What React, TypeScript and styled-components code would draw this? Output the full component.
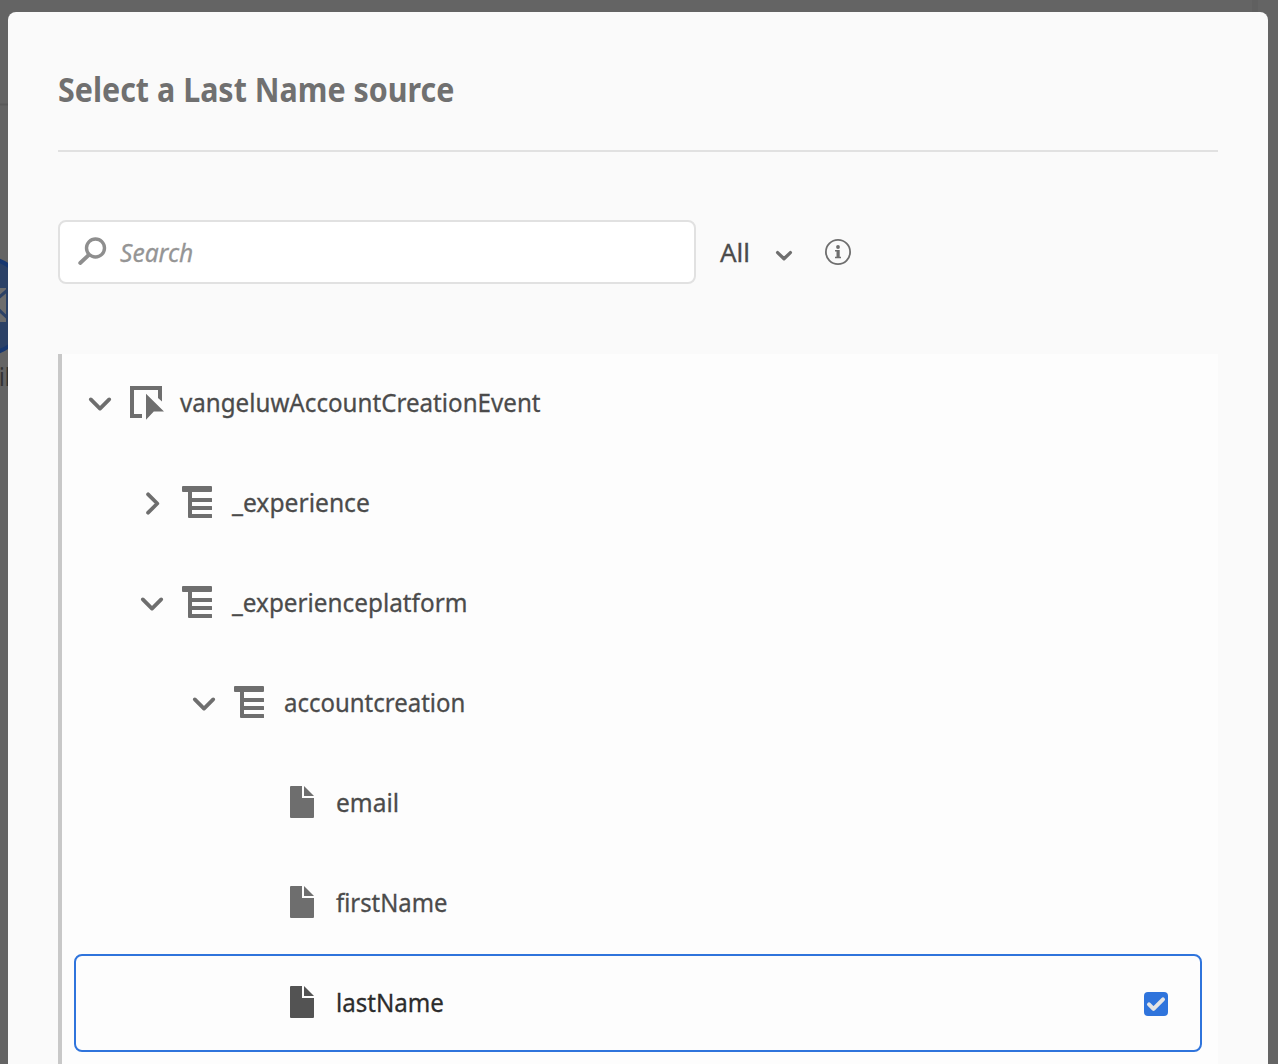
import React from "react";
import styled, { createGlobalStyle } from "styled-components";

const GlobalStyle = createGlobalStyle`
  *, *::before, *::after { box-sizing: border-box; }
  html, body { margin: 0; padding: 0; overflow: hidden; }
  body { font-family: "Noto Sans", "Open Sans", sans-serif; }
`;

const Screen = styled.div`
  position: relative;
  width: 1278px;
  height: 1064px;
  overflow: hidden;
  background: #646464;
  padding: 12px 10px 0 8px;
`;

const Canvas = styled.svg`
  position: absolute;
  left: 0;
  top: 0;
`;

const CanvasLabel = styled.span`
  position: absolute;
  left: -1px;
  top: 359px;
  font-size: 26px;
  line-height: 34px;
  transform: scaleX(0.85);
  transform-origin: left center;
  color: #333;
`;

const Dialog = styled.section`
  position: relative;
  height: 1100px;
  padding: 0 50px;
  border-radius: 8px;
  background: #fafafa;
`;

const Header = styled.header`
  height: 140px;
  padding-top: 54px;
  border-bottom: 2px solid #e1e1e1;
`;

const Title = styled.h1`
  margin: 0;
  width: max-content;
  font-size: 34px;
  line-height: 46px;
  font-weight: 700;
  color: #707070;
  transform: scaleX(0.895);
  transform-origin: left center;
`;

const Toolbar = styled.div`
  display: flex;
  align-items: center;
  height: 64px;
  margin-top: 68px;
`;

const SearchField = styled.div`
  display: flex;
  align-items: center;
  width: 638px;
  height: 64px;
  padding-left: 18px;
  border: 2px solid #e1e1e1;
  border-radius: 8px;
  background: #fff;
`;

const Text = styled.span<{ $fit: number; $color?: string; $italic?: boolean }>`
  display: block;
  width: max-content;
  font-size: 26px;
  line-height: 36px;
  white-space: nowrap;
  color: ${(p) => p.$color ?? "#4b4b4b"};
  -webkit-text-stroke: 0.3px currentColor;
  font-style: ${(p) => (p.$italic ? "italic" : "normal")};
  transform: scaleX(${(p) => p.$fit});
  transform-origin: left center;
`;

const RowText = styled(Text)`
  padding-bottom: 2px;
`;

const SearchText = styled.div`
  margin-left: 12px;
`;

const Picker = styled.div`
  display: flex;
  align-items: center;
  width: 105px;
  margin-left: 24px;
`;

const PickerLabel = styled.div`
  width: 55px;
`;

const Icon = styled.svg`
  display: block;
  flex: none;
`;

const Tree = styled.div`
  display: flex;
  flex-direction: column;
  gap: 2px;
  height: 760px;
  margin-top: 70px;
  padding: 0 16px 0 12px;
  border-left: 4px solid #c8c8c8;
  background: #fdfdfd;
`;

const Row = styled.div<{ $level: number; $selected?: boolean }>`
  display: flex;
  align-items: center;
  flex: none;
  height: 98px;
  padding-left: ${(p) => 8 + p.$level * 52}px;
  padding-right: 32px;
  border: 2px solid ${(p) => (p.$selected ? "#2f74dc" : "transparent")};
  border-radius: 8px;
`;

const Toggle = styled.div`
  display: flex;
  justify-content: center;
  width: 32px;
  margin-right: 14px;
`;

const RowIcon = styled.div`
  width: 36px;
  margin-right: 14px;
  padding-bottom: 2px;
`;

const Check = styled.div`
  display: flex;
  align-items: center;
  justify-content: center;
  width: 24px;
  height: 24px;
  margin: 2px 0 0 auto;
  border-radius: 4px;
  background: #2f74dc;
`;

const Chevron = ({ open }: { open: boolean }) => (
  <Icon width="32" height="32" viewBox="0 0 32 32" fill="none" stroke="#6e6e6e" strokeWidth="3.8" strokeLinecap="round" strokeLinejoin="round">
    <path d={open ? "M6.8 12.4 L16 21.6 L25.2 12.4" : "M12.1 7.3 L21.3 16.5 L12.1 25.7"} />
  </Icon>
);

const EventIcon = () => (
  <Icon width="36" height="36" viewBox="0 0 36 36" fill="#6e6e6e">
    <path d="M0 2H32V17.5L28 14V6H4V30H12V34H0Z" />
    <path d="M16 9.7L34 27.5H23.8L16 35.7Z" />
  </Icon>
);

const ObjectIcon = () => (
  <Icon width="36" height="36" viewBox="0 0 36 36" fill="#6e6e6e">
    <path d="M1 2H29Q30 2 30 3V7Q30 8 29 8H10V14H29.5Q30 14 30 14.5V17.5Q30 18 29.5 18H10V22H29.5Q30 22 30 22.5V25.5Q30 26 29.5 26H10V30H29.5Q30 30 30 30.5V33.5Q30 34 29.5 34H7Q6 34 6 33V8H1Q0 8 0 7V3Q0 2 1 2Z" />
  </Icon>
);

const FileIcon = ({ color }: { color: string }) => (
  <Icon width="36" height="36" viewBox="0 0 36 36" fill={color}>
    <path d="M5 2H16V14H28V33Q28 34 27 34H5Q4 34 4 33V3Q4 2 5 2Z" />
    <path d="M18 2L28 12H18Z" />
  </Icon>
);

type Node = {
  name: string;
  level: number;
  fit: number;
  kind: "event" | "object" | "file";
  open?: boolean;
  selected?: boolean;
};

const nodes: Node[] = [
  { name: "vangeluwAccountCreationEvent", level: 0, fit: 0.929, kind: "event", open: true },
  { name: "_experience", level: 1, fit: 0.948, kind: "object", open: false },
  { name: "_experienceplatform", level: 1, fit: 0.935, kind: "object", open: true },
  { name: "accountcreation", level: 2, fit: 0.922, kind: "object", open: true },
  { name: "email", level: 3, fit: 0.942, kind: "file" },
  { name: "firstName", level: 3, fit: 0.917, kind: "file" },
  { name: "lastName", level: 3, fit: 0.927, kind: "file", selected: true },
];

const TreeRow = ({ node }: { node: Node }) => (
  <Row $level={node.level} $selected={node.selected}>
    <Toggle>{node.kind !== "file" ? <Chevron open={!!node.open} /> : null}</Toggle>
    <RowIcon>
      {node.kind === "event" && <EventIcon />}
      {node.kind === "object" && <ObjectIcon />}
      {node.kind === "file" && <FileIcon color={node.selected ? "#535353" : "#6e6e6e"} />}
    </RowIcon>
    <RowText $fit={node.fit} $color={node.selected ? "#2c2c2c" : undefined}>{node.name}</RowText>
    {node.selected && (
      <Check>
        <Icon width="24" height="24" viewBox="0 0 24 24" fill="none" stroke="#e4e4e4" strokeWidth="4" strokeLinecap="round" strokeLinejoin="round">
          <path d="M5 12.3L9.5 16.8L19 7.3" />
        </Icon>
      </Check>
    )}
  </Row>
);

export default function App() {
  return (
    <>
      <GlobalStyle />
      <Screen>
        <Canvas width="1278" height="1064" viewBox="0 0 1278 1064">
          <path d="M0 104.5H8" stroke="#5a5a5a" strokeWidth="2" />
          <path d="M1252 0h6v12h-6z" fill="#606060" />
          <circle cx="-18.5" cy="306" r="48.5" fill="#2b4166" stroke="#17376f" strokeWidth="4" />
          <path d="M0 288H6V322H0Z" fill="#6d6d6d" />
          <path d="M-3 299L7 290.5M-3 308L7 317.5" stroke="#2b4166" strokeWidth="3" />
        </Canvas>
        <CanvasLabel>il</CanvasLabel>
        <Dialog>
          <Header>
            <Title>Select a Last Name source</Title>
          </Header>
          <Toolbar>
            <SearchField>
              <Icon width="30" height="32" viewBox="0 0 30 32" fill="none" stroke="#8e8e8e" strokeLinecap="round">
                <circle cx="17.5" cy="12" r="9" strokeWidth="3.4" />
                <path d="M10.7 19L2.2 27" strokeWidth="3.8" />
              </Icon>
              <SearchText>
                <Text $fit={0.945} $color="#959595" $italic>Search</Text>
              </SearchText>
            </SearchField>
            <Picker>
              <PickerLabel>
                <Text $fit={1}>All</Text>
              </PickerLabel>
              <Icon width="18" height="24" viewBox="0 0 18 24" fill="none" stroke="#6e6e6e" strokeWidth="3.3" strokeLinecap="round" strokeLinejoin="round">
                <path d="M2.6 12.6L9 18.8L15.4 12.6" />
              </Icon>
            </Picker>
            <Icon width="26" height="26" viewBox="0 0 26 26">
              <circle cx="13" cy="13" r="12.1" fill="none" stroke="#6e6e6e" strokeWidth="1.8" />
              <circle cx="13" cy="8" r="1.9" fill="#6e6e6e" />
              <path d="M10 11H14.7V17.7H16V19.3H10V17.7H11.5V12.6H10Z" fill="#6e6e6e" />
            </Icon>
          </Toolbar>
          <Tree>
            {nodes.map((node) => (
              <TreeRow key={node.name} node={node} />
            ))}
          </Tree>
        </Dialog>
      </Screen>
    </>
  );
}
